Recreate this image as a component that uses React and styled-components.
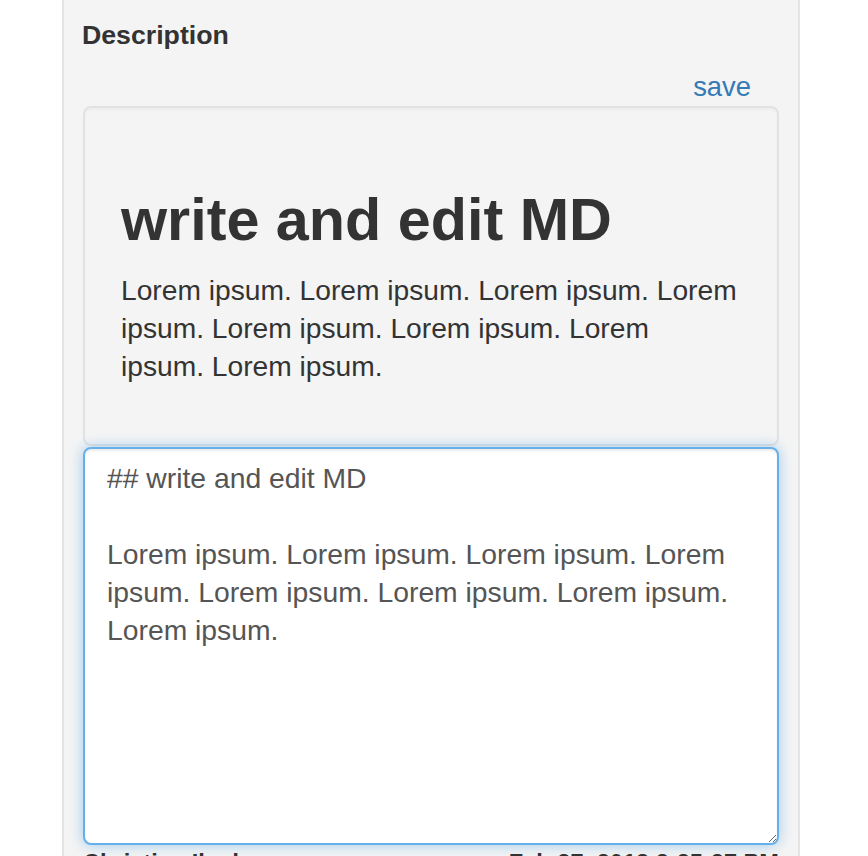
import React, { useEffect, useRef } from "react";
import styled, { createGlobalStyle } from "styled-components";

const GlobalStyle = createGlobalStyle`
  html, body {
    margin: 0;
    padding: 0;
    background: #ffffff;
    overflow: hidden;
  }
  body {
    font-family: "Liberation Sans", Arial, sans-serif;
    color: #333333;
  }
`;

const Page = styled.div`
  height: 856px;
  overflow: hidden;
`;

const Panel = styled.div`
  margin-left: 62px;
  width: 696px;
  min-height: 900px;
  padding: 16px 19px 0 19px;
  background-color: #f4f4f4;
  border-left: 2px solid #e4e4e4;
  border-right: 2px solid #e4e4e4;
`;

const Label = styled.div`
  margin-left: -1px;
  font-size: 26.7px;
  font-weight: 700;
  line-height: 38px;
  color: #333333;
`;

const SaveRow = styled.div`
  display: flex;
  justify-content: flex-end;
  padding: 14px 28px 0 0;
`;

const SaveLink = styled.a`
  font-size: 27.4px;
  line-height: 38px;
  color: #337ab7;
  text-decoration: none;
  cursor: pointer;
`;

const Preview = styled.div`
  border: 2px solid #e2e2e2;
  border-radius: 8px;
  background-color: #f4f4f4;
  padding: 38px 38.5px 38px 36px;
  box-shadow: inset 0 2px 2px rgba(0, 0, 0, 0.03);
`;

const PreviewTitle = styled.h2`
  margin: 42px 0 19px;
  font-size: 59.3px;
  font-weight: 700;
  line-height: 64px;
  color: #333333;
`;

const PreviewText = styled.p`
  margin: 0 0 21px;
  font-size: 28.2px;
  line-height: 38px;
  color: #333333;
`;

const Editor = styled.textarea`
  display: block;
  box-sizing: border-box;
  width: 100%;
  height: 398px;
  margin: 1px 0 0;
  padding: 10px 22px;
  font-family: "Liberation Sans", Arial, sans-serif;
  font-size: 28.3px;
  line-height: 38px;
  color: #555555;
  caret-color: #333333;
  background: #ffffff;
  border: 2px solid #66afe9;
  border-radius: 8px;
  outline: none;
  resize: vertical;
  box-shadow: inset 0 2px 2px rgba(0, 0, 0, 0.075),
    0 0 14px rgba(102, 175, 233, 0.6);
`;

const Footer = styled.div`
  display: flex;
  justify-content: space-between;
  margin-top: 3px;
  font-size: 23.6px;
  font-weight: 700;
  line-height: 30px;
  color: #333333;
`;

const markdown = `## write and edit MD

Lorem ipsum. Lorem ipsum. Lorem ipsum. Lorem ipsum. Lorem ipsum. Lorem ipsum. Lorem ipsum. Lorem ipsum.`;

export default function App() {
  const editorRef = useRef(null);

  useEffect(() => {
    const el = editorRef.current;
    if (el) {
      el.focus();
      const end = "## write and edit MD".length;
      el.setSelectionRange(end, end);
    }
  }, []);

  return (
    <Page>
      <GlobalStyle />
      <Panel>
        <Label>Description</Label>
        <SaveRow>
          <SaveLink>save</SaveLink>
        </SaveRow>
        <Preview>
          <PreviewTitle>write and edit MD</PreviewTitle>
          <PreviewText>
            Lorem ipsum. Lorem ipsum. Lorem ipsum. Lorem ipsum. Lorem ipsum.
            Lorem ipsum. Lorem ipsum. Lorem ipsum.
          </PreviewText>
        </Preview>
        <Editor ref={editorRef} defaultValue={markdown} spellCheck={false} />
        <Footer>
          <span>Christina Ikeda</span>
          <span>Feb 27, 2018 2:25:27 PM</span>
        </Footer>
      </Panel>
    </Page>
  );
}
